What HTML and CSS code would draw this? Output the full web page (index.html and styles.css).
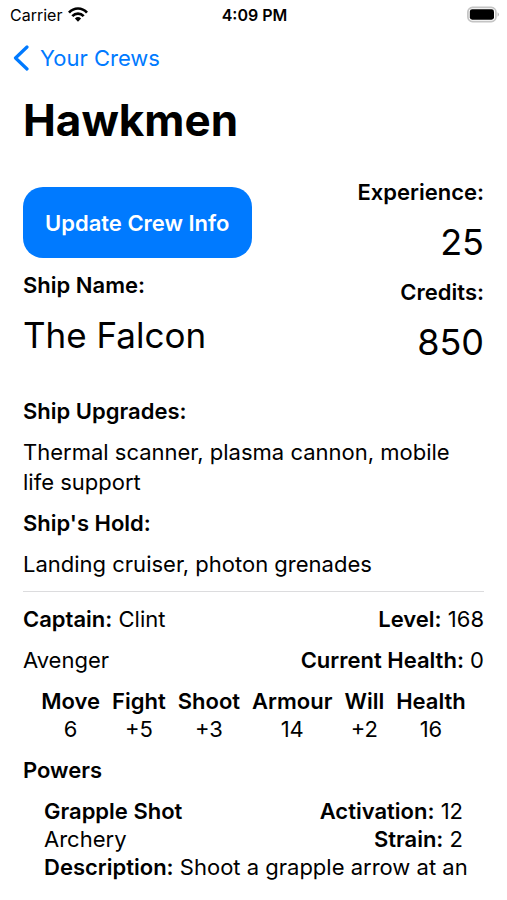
FILE: index.html
```html
<!DOCTYPE html>
<html lang="en">
<head>
<meta charset="utf-8">
<meta name="viewport" content="width=device-width, initial-scale=1">
<title>Hawkmen</title>
<link rel="stylesheet" href="styles.css">
</head>
<body>
<div class="screen">
<header class="status">
  <div class="carrier"><span>Carrier</span>
    <svg class="wifi" viewBox="0 0 20 15" aria-hidden="true"><g fill="none" stroke="#000" stroke-width="2.7"><path d="M1 5.6C6 .1 14 .1 19 5.6"/><path d="M4.3 9.1c3.2-3.3 8.2-3.3 11.4 0"/></g><path d="M6.9 11.5a4.5 4.5 0 0 1 6.2 0L10 14.8z"/></svg>
  </div>
  <time class="clock">4:09 PM</time>
  <svg class="battery" viewBox="0 0 32 16" aria-hidden="true"><rect x=".9" y=".9" width="28" height="14.2" rx="4.6" fill="none" stroke="#c4c4c4" stroke-width="1.7"/><rect x="2.8" y="2.8" width="24.2" height="10.4" rx="2.4"/><path d="M30.6 5.7q1.3.8 1.3 2.3t-1.3 2.3z" fill="#b4b4b4"/></svg>
</header>
<nav class="nav"><a class="back" href="#crews"><svg class="chevron" viewBox="0 0 16 26" aria-hidden="true"><path d="M14 2 2.5 13 14 24" fill="none" stroke="currentColor" stroke-width="3.2" stroke-linecap="round" stroke-linejoin="round"/></svg>Your Crews</a></nav>
<main class="content">
  <h1 class="title">Hawkmen</h1>
  <section class="summary">
    <div class="ship">
      <button class="update" type="button">Update Crew Info</button>
      <h2 class="label">Ship Name:</h2>
      <p class="value ship-name">The Falcon</p>
    </div>
    <div class="totals">
      <h2 class="label">Experience:</h2><p class="value">25</p>
      <h2 class="label">Credits:</h2><p class="value">850</p>
    </div>
  </section>
  <section class="inventory">
    <h2 class="label">Ship Upgrades:</h2>
    <p class="text">Thermal scanner, plasma cannon, mobile life support</p>
    <h2 class="label">Ship's Hold:</h2>
    <p class="text">Landing cruiser, photon grenades</p>
  </section>
  <section class="captain">
    <div class="row"><span><b>Captain:</b> Clint</span><span><b>Level:</b> 168</span></div>
    <div class="row"><span>Avenger</span><span><b>Current Health:</b> 0</span></div>
    <table class="stats">
      <thead><tr><th>Move</th><th>Fight</th><th>Shoot</th><th>Armour</th><th>Will</th><th>Health</th></tr></thead>
      <tbody><tr><td>6</td><td>+5</td><td>+3</td><td>14</td><td>+2</td><td>16</td></tr></tbody>
    </table>
    <h2 class="label">Powers</h2>
    <article class="power">
      <div class="row"><b>Grapple Shot</b><span><b>Activation:</b> 12</span></div>
      <div class="row"><span>Archery</span><span><b>Strain:</b> 2</span></div>
      <p class="description"><b>Description:</b> Shoot a grapple arrow at an</p>
    </article>
  </section>
</main>
</div>
</body>
</html>
```
FILE: styles.css
```css
* { box-sizing: border-box; }
body { margin: 0; background: #fff; color: #000; font: 22px/28px Inter, "Liberation Sans", sans-serif; }
h1, h2, p { margin: 0; }
b, th, .label { font-weight: 600; }
.screen { min-height: 100vh; padding-bottom: 16px; }
.status { display: grid; grid-template-columns: 1fr auto 1fr; align-items: center; height: 29px; padding: 0 8px 0 10px; font-size: 16px; line-height: 20px; }
.carrier { display: flex; align-items: center; gap: 6px; }
.wifi { width: 20px; height: 15px; }
.clock { font-weight: 600; }
.battery { width: 32px; height: 17px; justify-self: end; }
.nav { display: flex; height: 57px; padding: 0 13px; align-items: center; }
.back { display: flex; align-items: center; gap: 11px; color: #007aff; text-decoration: none; }
.chevron { width: 16px; height: 26px; }
.content { padding: 8px 23px 0; }
.title { font-size: 44px; line-height: 52px; font-weight: 700; }
.summary { display: flex; justify-content: space-between; margin-top: 32px; }
.ship { padding-top: 9px; }
.update { display: block; height: 71px; margin-bottom: 13px; padding: 0 22px; border: 0; border-radius: 20px; background: #007aff; color: #fff; font: inherit; font-weight: 600; }
.label { font-size: 22px; line-height: 28px; }
.value { font-size: 36px; line-height: 44px; margin: 14px 0; }
.ship-name { font-size: 35px; }
.totals { text-align: right; }
.inventory { display: grid; gap: 12px; padding: 19px 0 12px; border-bottom: 1px solid #dcdcde; }
.text { line-height: 30px; }
.captain { display: grid; gap: 13px; padding-top: 13px; }
.row { display: flex; justify-content: space-between; }
.stats { border-collapse: collapse; justify-self: center; }
.stats th, .stats td { padding: 0 6px; text-align: center; }
.power { padding: 0 21px; }
.description { margin-right: -21px; }
```
